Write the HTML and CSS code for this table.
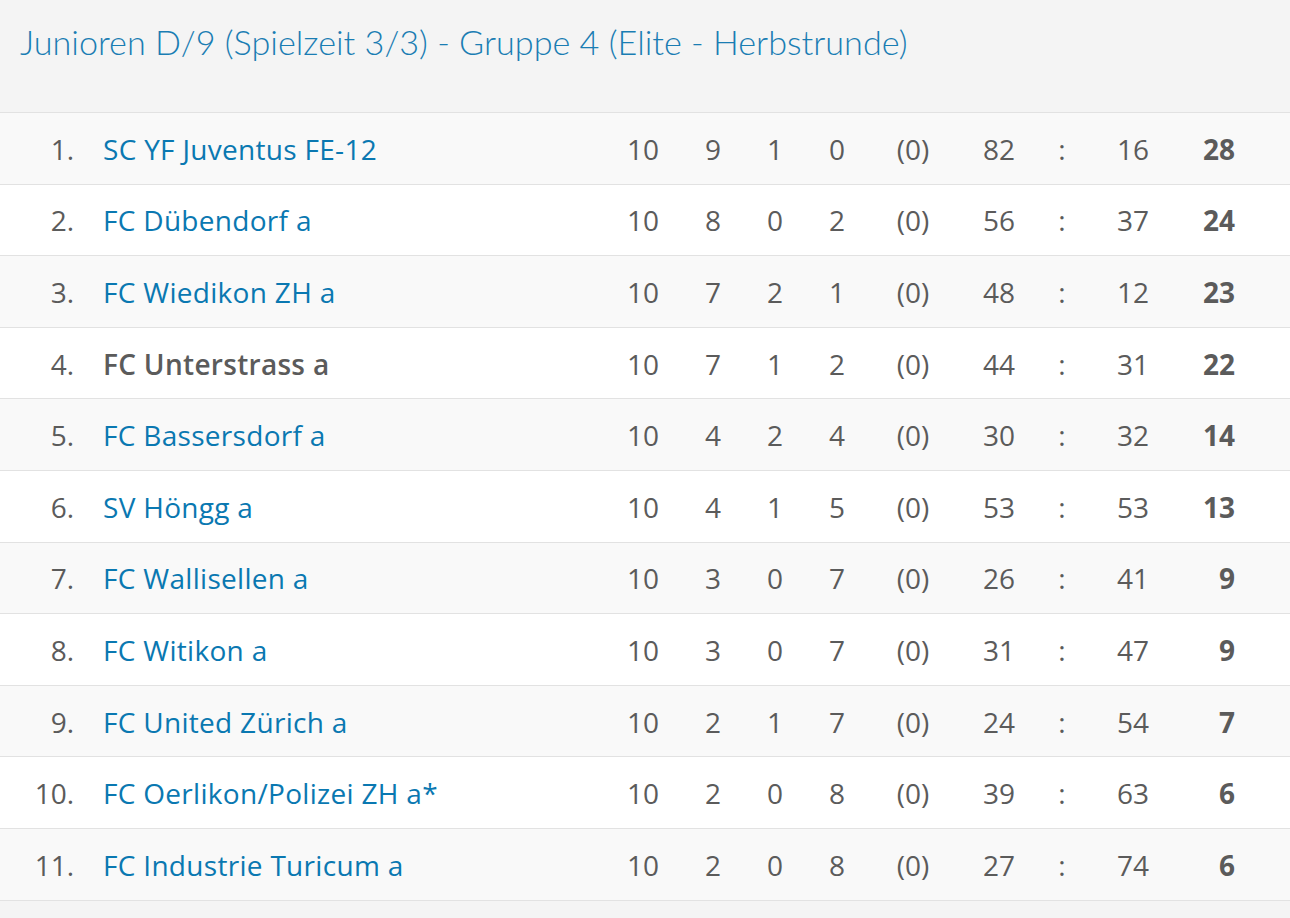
FILE: index.html
```html
<!DOCTYPE html>
<html lang="de">
<head>
<meta charset="utf-8">
<title>Junioren D/9 - Gruppe 4</title>
<link rel="stylesheet" href="styles.css">
</head>
<body>
<header class="head">
  <h1 class="title">Junioren D/9 (Spielzeit 3/3) - Gruppe 4 (Elite - Herbstrunde)</h1>
</header>
<div class="table">
  <div class="row"><span class="rank">1.</span><span class="team"><a href="#">SC YF Juventus FE-12</a></span><span class="c">10</span><span class="c">9</span><span class="c">1</span><span class="c">0</span><span class="c">(0)</span><span class="gf">82</span><span class="c">:</span><span class="ga">16</span><span class="pts">28</span></div>
  <div class="row"><span class="rank">2.</span><span class="team"><a href="#">FC Dübendorf a</a></span><span class="c">10</span><span class="c">8</span><span class="c">0</span><span class="c">2</span><span class="c">(0)</span><span class="gf">56</span><span class="c">:</span><span class="ga">37</span><span class="pts">24</span></div>
  <div class="row"><span class="rank">3.</span><span class="team"><a href="#">FC Wiedikon ZH a</a></span><span class="c">10</span><span class="c">7</span><span class="c">2</span><span class="c">1</span><span class="c">(0)</span><span class="gf">48</span><span class="c">:</span><span class="ga">12</span><span class="pts">23</span></div>
  <div class="row"><span class="rank">4.</span><span class="team own">FC Unterstrass a</span><span class="c">10</span><span class="c">7</span><span class="c">1</span><span class="c">2</span><span class="c">(0)</span><span class="gf">44</span><span class="c">:</span><span class="ga">31</span><span class="pts">22</span></div>
  <div class="row"><span class="rank">5.</span><span class="team"><a href="#">FC Bassersdorf a</a></span><span class="c">10</span><span class="c">4</span><span class="c">2</span><span class="c">4</span><span class="c">(0)</span><span class="gf">30</span><span class="c">:</span><span class="ga">32</span><span class="pts">14</span></div>
  <div class="row"><span class="rank">6.</span><span class="team"><a href="#">SV Höngg a</a></span><span class="c">10</span><span class="c">4</span><span class="c">1</span><span class="c">5</span><span class="c">(0)</span><span class="gf">53</span><span class="c">:</span><span class="ga">53</span><span class="pts">13</span></div>
  <div class="row"><span class="rank">7.</span><span class="team"><a href="#">FC Wallisellen a</a></span><span class="c">10</span><span class="c">3</span><span class="c">0</span><span class="c">7</span><span class="c">(0)</span><span class="gf">26</span><span class="c">:</span><span class="ga">41</span><span class="pts">9</span></div>
  <div class="row"><span class="rank">8.</span><span class="team"><a href="#">FC Witikon a</a></span><span class="c">10</span><span class="c">3</span><span class="c">0</span><span class="c">7</span><span class="c">(0)</span><span class="gf">31</span><span class="c">:</span><span class="ga">47</span><span class="pts">9</span></div>
  <div class="row"><span class="rank">9.</span><span class="team"><a href="#">FC United Zürich a</a></span><span class="c">10</span><span class="c">2</span><span class="c">1</span><span class="c">7</span><span class="c">(0)</span><span class="gf">24</span><span class="c">:</span><span class="ga">54</span><span class="pts">7</span></div>
  <div class="row"><span class="rank">10.</span><span class="team"><a href="#">FC Oerlikon/Polizei ZH a*</a></span><span class="c">10</span><span class="c">2</span><span class="c">0</span><span class="c">8</span><span class="c">(0)</span><span class="gf">39</span><span class="c">:</span><span class="ga">63</span><span class="pts">6</span></div>
  <div class="row"><span class="rank">11.</span><span class="team"><a href="#">FC Industrie Turicum a</a></span><span class="c">10</span><span class="c">2</span><span class="c">0</span><span class="c">8</span><span class="c">(0)</span><span class="gf">27</span><span class="c">:</span><span class="ga">74</span><span class="pts">6</span></div>
</div>
</body>
</html>
```

FILE: styles.css
```css
html, body {
  margin: 0;
  padding: 0;
  background: #f4f4f4;
}

.head {
  box-sizing: border-box;
  height: 113px;
  border-bottom: 1px solid #e2e2e2;
}

.title {
  margin: 0;
  padding: 22px 0 0 20px;
  font-family: Lato, "Open Sans", sans-serif;
  font-weight: 300;
  font-size: 34.2px;
  line-height: 40px;
  color: #1a7db3;
}

.table {
  font-family: "Open Sans", sans-serif;
  font-size: 28px;
  color: #5b5b5b;
}

.row {
  display: grid;
  grid-template-columns: 74px 539px 60px 80px 44px 80px 72px 66px 94px 76px 50px;
  align-items: center;
  height: 71.6px;
  box-sizing: border-box;
  padding-top: 1px;
  border-bottom: 1px solid #e2e2e2;
  background: #ffffff;
  white-space: nowrap;
}

.row:nth-child(odd) {
  background: #f9f9f9;
}

.rank {
  text-align: right;
}

.team {
  padding-left: 29px;
  letter-spacing: 0.3px;
}

.team a {
  color: #0a78b1;
  text-decoration: none;
}

.team.own {
  font-weight: 600;
  color: #5b5b5b;
}

.c {
  text-align: center;
}

.gf {
  text-align: right;
}

.ga {
  padding-left: 8px;
}

.pts {
  text-align: right;
  font-weight: 700;
}
```
